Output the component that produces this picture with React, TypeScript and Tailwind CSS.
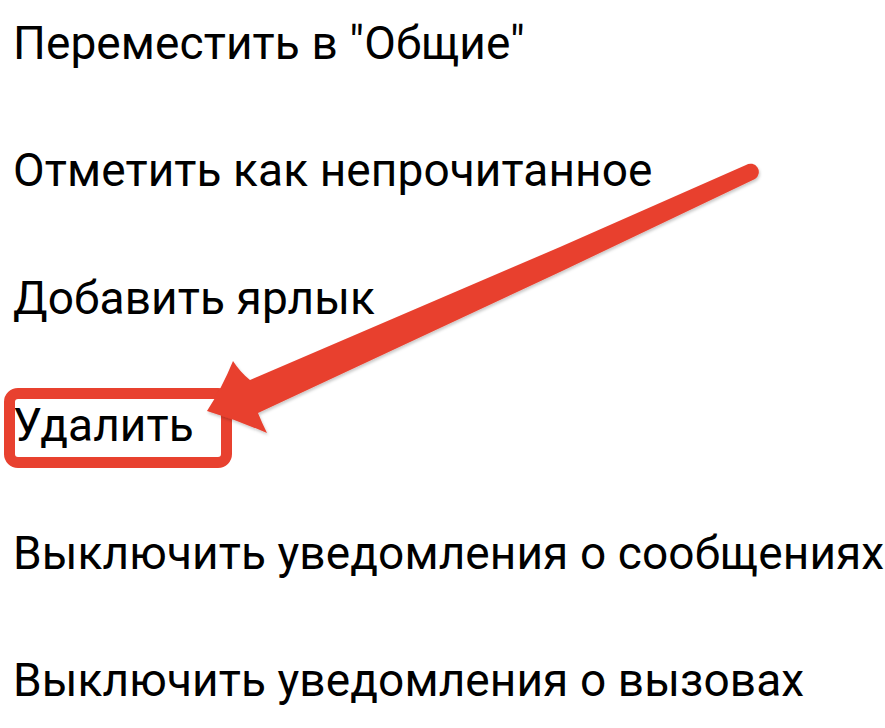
import React from "react";

const items = [
  'Переместить в "Общие"',
  "Отметить как непрочитанное",
  "Добавить ярлык",
  "Удалить",
  "Выключить уведомления о сообщениях",
  "Выключить уведомления о вызовах",
];

export default function App() {
  return (
    <div className="relative w-[885px] h-[728px] overflow-hidden bg-white" style={{ fontFamily: "Roboto, 'Noto Sans', sans-serif" }}>
      <div className="flex flex-col gap-[75.4px] pt-[17px] pl-[13px]">
        {items.map((t) => (
          <div key={t} className="text-[46px] leading-[52px] text-black whitespace-nowrap tracking-[0.1px]">
            {t}
          </div>
        ))}
      </div>
      <div className="absolute left-[4px] top-[388px] w-[228px] h-[80px] rounded-[14px] border-[11px] border-[#e8412f]" />
      <svg className="absolute left-0 top-0 pointer-events-none" width="885" height="728" viewBox="0 0 885 728">
        <defs>
          <filter id="sh" x="-10%" y="-10%" width="120%" height="130%">
            <feDropShadow dx="1" dy="2" stdDeviation="1.5" floodColor="#000" floodOpacity="0.22" />
          </filter>
        </defs>
        <path
          d="M 207 411 Q 222 388 233 361 Q 240 372 250 380 L 560 247 L 746 165 A 7 7 0 0 1 755 179 L 560 272 L 258 413 Q 262 423 267 433 Q 237 420 207 411 Z"
          fill="#e8412f"
          filter="url(#sh)"
        />
      </svg>
    </div>
  );
}
